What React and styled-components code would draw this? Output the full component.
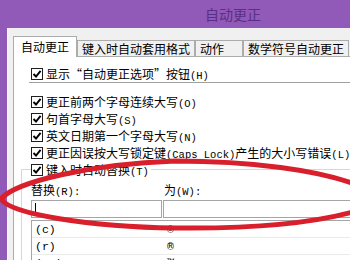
import React from "react";
import styled, { createGlobalStyle } from "styled-components";

const Global = createGlobalStyle`
  html, body { margin: 0; padding: 0; }
  body {
    width: 350px; height: 260px; overflow: hidden;
    background: #9159b8;
    font-family: "Noto Sans CJK SC", sans-serif;
  }
`;

const Screen = styled.div`
  position: relative;
  width: 350px;
  height: 260px;
  overflow: hidden;
  display: flex;
  flex-direction: column;
  background: #9159b8;
`;

const TitleBar = styled.div`
  height: 28px;
  flex: none;
  display: flex;
  align-items: center;
  padding-left: 205px;
  font-size: 14px;
  color: #5a2f86;
  font-family: "Noto Sans CJK SC", sans-serif;
`;

const Frame = styled.div`
  flex: 1;
  display: flex;
  min-height: 0;
`;

const FrameEdge = styled.div`
  width: 7px;
  flex: none;
  background: #9159b8;
`;

const Dialog = styled.div`
  width: 430px;
  flex: none;
  display: flex;
  flex-direction: column;
  background: #f0f0f0;
  padding: 8px 0 0 5px;
  box-sizing: border-box;
  border-left: 1px solid #f7f7f7;
`;

const TabRow = styled.div`
  height: 20px;
  display: flex;
  align-items: flex-end;
  flex: none;
  position: relative;
  z-index: 1;
`;

const Tab = styled.div`
  box-sizing: border-box;
  min-width: 48px;
  height: ${(p) => (p.$active ? "21px" : "16px")};
  margin-bottom: ${(p) => (p.$active ? "-1px" : "0")};
  padding: ${(p) => (p.$active ? "0 7px 2px" : "0 4px")};
  border: 1px solid #acacac;
  border-bottom: none;
  background: ${(p) => (p.$active ? "#ffffff" : "#f0f0f0")};
  font-size: 12px;
  line-height: 15px;
  display: flex;
  align-items: center;
  color: #000;
  white-space: nowrap;
`;

const Panel = styled.div`
  flex: 1;
  background: #fff;
  border-left: 1px solid #acacac;
  border-top: 1px solid #acacac;
  padding-top: 8px;
  display: flex;
  flex-direction: column;
`;

const Row = styled.div`
  height: 17px;
  display: flex;
  align-items: center;
  gap: 3px;
  padding-left: ${(p) => (p.$legend ? "0" : "17px")};
  margin-top: ${(p) => (p.$gap ? "10px" : "0")};
  font-size: 12px;
  color: #000;
  white-space: nowrap;
`;

const Separator = styled.div`
  height: 1px;
  margin-left: 15px;
  background: #a0a0a0;
`;

const Box = styled.span`
  width: 12px;
  height: 12px;
  flex: none;
  box-sizing: border-box;
  border: 1px solid #1e1e1e;
  background: #fff;
  display: inline-flex;
  align-items: center;
  justify-content: center;
`;

const Ascii = styled.span`
  font-family: "Liberation Mono", monospace;
  font-size: 10.5px;
`;

const Cjk = styled.span`
  font-family: "Noto Sans CJK SC", sans-serif;
  font-size: 12px;
`;

const Group = styled.fieldset`
  margin: 0 0 0 7px;
  padding: 0 0 0 9px;
  border: 1px solid #d6d6d6;
  border-right: none;
  border-bottom: none;
  min-width: 0;
`;

const Legend = styled.legend`
  padding: 0 2px 0 0;
  margin: 0;
`;

const Columns = styled.div`
  display: grid;
  grid-template-columns: 131px 1fr;
  column-gap: 1px;
  margin-top: ${(p) => p.$mt || "0"};
`;

const FieldLabel = styled.div`
  height: 14px;
  line-height: 14px;
  font-size: 12px;
  padding-left: ${(p) => (p.$second ? "1px" : "0")};
  white-space: nowrap;
`;

const Input = styled.div`
  height: 18px;
  box-sizing: border-box;
  border: 1px solid #a5a5a5;
  background: #fff;
  display: flex;
  align-items: center;
  padding-left: 3px;
`;

const Caret = styled.span`
  width: 1px;
  height: 12px;
  background: #000;
`;

const List = styled.div`
  margin-top: 2px;
  border-top: 1px solid #a5a5a5;
  border-left: 1px solid #a5a5a5;
  background: #fff;
`;

const ListRow = styled.div`
  display: grid;
  grid-template-columns: 131px 1fr;
  column-gap: 1px;
  height: 17px;
  border-bottom: 1px solid #ebebeb;
  box-sizing: border-box;
`;

const Cell = styled.div`
  padding-left: 3px;
  display: flex;
  align-items: center;
  font-family: "Liberation Mono", monospace;
  font-size: 11.5px;
  color: #000;
`;

const Overlay = styled.svg`
  position: absolute;
  left: 0;
  top: 0;
  pointer-events: none;
`;

const Check = () => (
  <svg width="10" height="10" viewBox="0 0 10 10">
    <path d="M1.5 5 L4 7.5 L8.6 1.8" fill="none" stroke="#000" strokeWidth="1.9" />
  </svg>
);

const Text = ({ children }) => (
  <>
    {children.match(/[\x20-\x7e]+|[^\x20-\x7e]+/g).map((seg, i) =>
      /^[\x20-\x7e]+$/.test(seg) ? <Ascii key={i}>{seg}</Ascii> : <Cjk key={i}>{seg}</Cjk>
    )}
  </>
);

const CheckRow = ({ label, gap, legend }) => (
  <Row $gap={gap} $legend={legend}>
    <Box>
      <Check />
    </Box>
    <span>
      <Text>{label}</Text>
    </span>
  </Row>
);

const tabs = ["自动更正", "键入时自动套用格式", "动作", "数学符号自动更正"];

const options = [
  "更正前两个字母连续大写(O)",
  "句首字母大写(S)",
  "英文日期第一个字母大写(N)",
  "更正因误按大写锁定键(Caps Lock)产生的大小写错误(L)",
];

const entries = [
  ["(c)", "©"],
  ["(r)", "®"],
  ["(tm)", "™"],
];

export default function App() {
  return (
    <>
      <Global />
      <Screen>
        <TitleBar>自动更正</TitleBar>
        <Frame>
          <FrameEdge />
          <Dialog>
            <TabRow>
              {tabs.map((t, i) => (
                <Tab key={t} $active={i === 0}>
                  {t}
                </Tab>
              ))}
            </TabRow>
            <Panel>
              <CheckRow label="显示“自动更正选项”按钮(H)" />
              <Separator />
              {options.map((o, i) => (
                <CheckRow key={o} label={o} gap={i === 0} />
              ))}
              <Group>
                <Legend>
                  <CheckRow legend label="键入时自动替换(T)" />
                </Legend>
                <Columns $mt="5px">
                  <FieldLabel>
                    <Text>替换(R):</Text>
                  </FieldLabel>
                  <FieldLabel $second>
                    <Text>为(W):</Text>
                  </FieldLabel>
                </Columns>
                <Columns $mt="3px">
                  <Input>
                    <Caret />
                  </Input>
                  <Input />
                </Columns>
                <List>
                  {entries.map(([a, b]) => (
                    <ListRow key={a}>
                      <Cell>{a}</Cell>
                      <Cell>{b}</Cell>
                    </ListRow>
                  ))}
                </List>
              </Group>
            </Panel>
          </Dialog>
        </Frame>
        <Overlay width="350" height="260" viewBox="0 0 350 260">
          <path
            d="M1 199 C 15 182, 90 164, 175 161 C 250 161, 320 170, 360 186"
            fill="none"
            stroke="#d81f2b"
            strokeWidth="5"
            strokeLinecap="round"
          />
          <path
            d="M1 199 C 10 214, 90 227, 175 228 C 260 229, 320 222, 360 210"
            fill="none"
            stroke="#d81f2b"
            strokeWidth="5"
            strokeLinecap="round"
          />
        </Overlay>
      </Screen>
    </>
  );
}
